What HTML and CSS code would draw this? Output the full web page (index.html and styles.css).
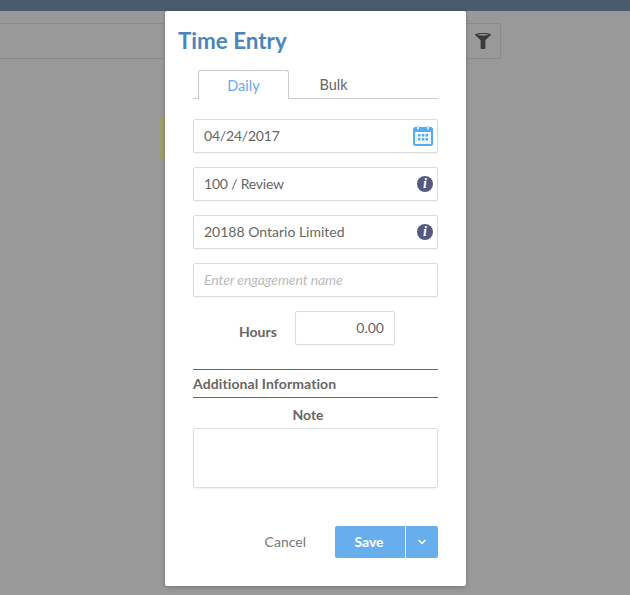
FILE: index.html
```html
<!DOCTYPE html>
<html lang="en">
<head>
<meta charset="UTF-8">
<meta name="viewport" content="width=device-width, initial-scale=1.0">
<title>Time Entry</title>
<link rel="stylesheet" href="styles.css">
</head>
<body>
    <div class="topbar"></div>
    <div class="toolbar">
        <div class="filter-btn">
            <svg width="18" height="16" viewBox="0 0 18 16">
                <path fill="#3a3a3a" d="M1 1.5C1 .6 4.5 0 9 0s8 .6 8 1.5c0 .5-.4.9-1 1.3l-4.600 4.400V15c0 .6-.4 1-1 1H7.600c-.6 0-1-.4-1-1V7.200L2 2.800c-.6-.4-1-.8-1-1.300z"/>
                <path fill="#9a9a9a" d="M3 1.800C4.500 1.200 6.500 1 9 1s4.500.2 6 .8c-1.500.5-3.500.7-6 .7s-4.500-.2-6-.7z"/>
            </svg>
        </div>
    </div>
    <div class="notice"></div>

    <div class="modal">
        <h2 class="modal-title">Time Entry</h2>
        <div class="modal-body">
            <div class="tabs">
                <div class="tab active">Daily</div>
                <div class="tab">Bulk</div>
            </div>

            <div class="field">
                <span class="tight">04/24/2017</span>
                <svg class="calendar" width="20" height="20" viewBox="0 0 20 20">
                    <rect x="0" y="1" width="20" height="19" rx="2.500" fill="#5aaaee"/>
                    <rect x="2" y="6" width="16" height="12" fill="#f2f8fe"/>
                    <rect x="4" y="0" width="2" height="4" rx="1" fill="#fff" stroke="#5aaaee" stroke-width=".5"/>
                    <rect x="14" y="0" width="2" height="4" rx="1" fill="#fff" stroke="#5aaaee" stroke-width=".5"/>
                    <path fill="#5aaaee" d="M5 8h2.500v2.500H5zM8.800 8h2.500v2.500H8.800zM12.500 8H15v2.500h-2.500zM5 12h2.500v2.500H5zM8.800 12h2.500v2.500H8.800zM12.500 12H15v2.500h-2.500z"/>
                </svg>
            </div>
            <div class="field">
                <span class="tight">100 / Review</span>
                <span class="info">i</span>
            </div>
            <div class="field">
                <span>20188 Ontario Limited</span>
                <span class="info">i</span>
            </div>
            <div class="field placeholder">
                <span>Enter engagement name</span>
            </div>

            <div class="hours-row">
                <span class="hours-label">Hours</span>
                <div class="field hours-input">0.00</div>
            </div>

            <div class="section-title">Additional Information</div>
            <div class="note-label">Note</div>
            <div class="note-box"></div>

            <div class="actions">
                <span class="cancel">Cancel</span>
                <div class="btn-save">Save</div>
                <div class="btn-caret">
                    <svg width="10" height="6" viewBox="0 0 10 6">
                        <path fill="none" stroke="#fff" stroke-width="1.500" d="M1.500 1l3.500 3.500L8.500 1"/>
                    </svg>
                </div>
            </div>
        </div>
    </div>
</body>
</html>
```

FILE: styles.css
```css
* {
    box-sizing: border-box;
}
html, body {
    height: 100%;
}
body {
    margin: 0;
    background: #999;
    font-family: Lato, "Open Sans", sans-serif;
    font-size: 14px;
    color: #666;
    overflow: hidden;
}
.topbar {
    height: 11px;
    background: #4b5b6c;
}
.toolbar {
    display: flex;
    justify-content: flex-end;
    width: 501px;
    height: 36px;
    margin-top: 12px;
    border-top: 1px solid #8a8a8a;
    border-bottom: 1px solid #8a8a8a;
}
.filter-btn {
    display: flex;
    align-items: center;
    justify-content: flex-end;
    width: 40px;
    padding-right: 8px;
    border-right: 1px solid #8a8a8a;
    border-radius: 0 2px 2px 0;
}
.notice {
    width: 20px;
    height: 42px;
    margin: 58px 0 0 160px;
    background: #a09d6e;
    border-radius: 3px;
}
.modal {
    position: absolute;
    left: 165px;
    top: 11px;
    width: 301px;
    height: 575px;
    padding: 15px 28px 0 14px;
    background: #fff;
    border-radius: 2px;
    box-shadow: 0 1px 4px rgba(0,0,0,0.25);
}
.modal-title {
    margin: 0 0 0 -1px;
    font-size: 22.400px;
    line-height: 29px;
    font-weight: 700;
    color: #4a86bb;
}
.modal-body {
    padding-left: 14px;
}
.tabs {
    display: flex;
    height: 29px;
    margin-top: 15px;
    padding-left: 5px;
    border-bottom: 1px solid #ccc;
}
.tab {
    width: 91px;
    height: 29px;
    line-height: 30px;
    text-align: center;
    font-size: 14.500px;
}
.tab.active {
    color: #6aa9ee;
    background: #fff;
    border: 1px solid #ccc;
    border-bottom: none;
    border-radius: 3px 3px 0 0;
}
.tab + .tab {
    width: 89px;
}
.field {
    display: flex;
    align-items: center;
    justify-content: space-between;
    height: 34px;
    margin-top: 14px;
    padding: 0 4px 2px 10px;
    background: #fff;
    border: 1px solid #ddd;
    border-radius: 2px;
    box-shadow: 0 1px 2px rgba(0,0,0,0.06);
}
.field svg, .field .info {
    margin-top: 2px;
}
.tabs + .field {
    margin-top: 20px;
}
.tight {
    letter-spacing: -0.2px;
}
.placeholder {
    font-style: italic;
    letter-spacing: -0.1px;
    color: #bbb;
}
.info {
    width: 16px;
    height: 16px;
    border-radius: 50%;
    background: #525a80;
    color: #fff;
    font-family: "Liberation Serif", serif;
    font-size: 14px;
    font-weight: 700;
    font-style: italic;
    line-height: 16px;
    text-align: center;
}
.hours-row {
    display: flex;
    margin-top: 14px;
    padding-left: 46px;
}
.hours-label {
    width: 56px;
    padding-top: 12px;
    line-height: 17px;
    font-weight: 700;
}
.hours-input {
    justify-content: flex-end;
    width: 100px;
    margin-top: 0;
    padding-right: 10px;
}
.section-title {
    height: 29px;
    margin-top: 24px;
    border-top: 1px solid #666;
    border-bottom: 1px solid #666;
    line-height: 28px;
    font-weight: 700;
    letter-spacing: 0.1px;
}
.note-label {
    width: 230px;
    margin-top: 8px;
    line-height: 17px;
    font-weight: 700;
    text-align: center;
}
.note-box {
    height: 60px;
    margin-top: 5px;
    border: 1px solid #ddd;
    border-radius: 2px;
    box-shadow: 0 1px 2px rgba(0,0,0,0.06);
}
.actions {
    display: flex;
    align-items: center;
    justify-content: flex-end;
    height: 32px;
    margin-top: 38px;
}
.cancel {
    margin-right: 29px;
    padding-bottom: 1px;
    color: #777;
}
.btn-save, .btn-caret {
    display: flex;
    align-items: center;
    justify-content: center;
    height: 32px;
    padding-bottom: 1px;
    background: #67aeec;
    color: #fff;
    font-weight: 700;
}
.btn-save {
    width: 70px;
    padding-right: 2px;
    border-radius: 2px 0 0 2px;
}
.btn-caret {
    width: 32px;
    margin-left: 1px;
    border-radius: 0 2px 2px 0;
}
```
